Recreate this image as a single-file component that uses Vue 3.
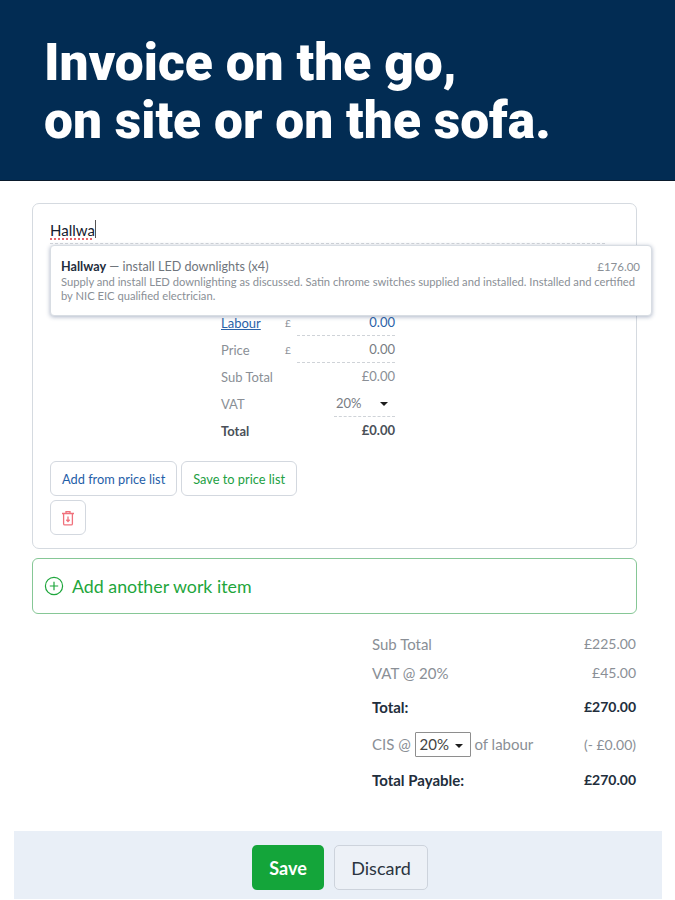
<template>
  <div class="page">
    <header class="hero">
      <h1>Invoice on the go,<br>on site or on the sofa.</h1>
    </header>

    <section class="card">
      <div class="title-row">
        <span class="typed">Hallwa</span><span class="caret"></span>
      </div>

      <div class="suggest">
        <div class="suggest-top">
          <span><b>Hallway</b> — install LED downlights (x4)</span>
          <span class="suggest-price">£176.00</span>
        </div>
        <p>Supply and install LED downlighting as discussed. Satin chrome switches supplied and installed. Installed and certified by NIC EIC qualified electrician.</p>
      </div>

      <div class="lines">
        <div class="line" v-for="row in priceRows" :key="row.label">
          <span class="lbl" :class="{ link: row.link }">{{ row.label }}</span>
          <span class="cur">£</span>
          <span class="val dashed" :class="{ blue: row.link }">{{ row.value }}</span>
        </div>
        <div class="line">
          <span class="lbl">Sub Total</span>
          <span class="cur"></span>
          <span class="val plain">£0.00</span>
        </div>
        <div class="line">
          <span class="lbl">VAT</span>
          <span class="cur"></span>
          <span class="val dashed vat">20%<i class="arrow"></i></span>
        </div>
        <div class="line strong">
          <span class="lbl">Total</span>
          <span class="cur"></span>
          <span class="val">£0.00</span>
        </div>
      </div>

      <div class="actions">
        <button class="btn blue-text">Add from price list</button>
        <button class="btn green-text">Save to price list</button>
      </div>
      <button class="btn trash" aria-label="Delete">
        <svg width="14" height="16" viewBox="0 0 14 16" fill="none" stroke="#f0717c" stroke-width="1.3">
          <path d="M1 3.5h12M5 3.5V1.6h4v1.9M2.6 3.5v10.2c0 .7.5 1.2 1.2 1.2h6.4c.7 0 1.2-.5 1.2-1.2V3.5" />
          <path d="M7 6.5v5M5.3 9.8 7 11.5l1.7-1.7" />
        </svg>
      </button>
    </section>

    <button class="add-item">
      <svg width="20" height="20" viewBox="0 0 20 20" fill="none" stroke="#1ea63c" stroke-width="1.2">
        <circle cx="10" cy="10" r="8.6" />
        <path d="M10 5.8v8.4M5.8 10h8.4" />
      </svg>
      <span>Add another work item</span>
    </button>

    <section class="totals">
      <div class="t-row"><span>Sub Total</span><span>£225.00</span></div>
      <div class="t-row"><span>VAT @ 20%</span><span>£45.00</span></div>
      <div class="t-row bold total"><span>Total:</span><span>£270.00</span></div>
      <div class="t-row cis">
        <span class="cis-label">CIS @ <span class="select">20%<i class="arrow"></i></span> of labour</span>
        <span>(- £0.00)</span>
      </div>
      <div class="t-row bold payable"><span>Total Payable:</span><span>£270.00</span></div>
    </section>

    <footer class="bar">
      <button class="save">Save</button>
      <button class="discard">Discard</button>
    </footer>
  </div>
</template>

<script setup>
const priceRows = [
  { label: 'Labour', value: '0.00', link: true },
  { label: 'Price', value: '0.00', link: false }
]
</script>

<style>
html, body {
  background: #fff;
}
</style>

<style scoped>
.page {
  width: 675px;
  height: 900px;
  overflow: hidden;
  font-family: "Lato", "Liberation Sans", sans-serif;
  color: #8a8f96;
}

button {
  font-family: inherit;
  cursor: pointer;
}

.hero {
  height: 181px;
  box-sizing: border-box;
  padding: 34px 44px 0;
  background: #022c53;
  border-bottom: 1px solid #0a1a2c;
}

.hero h1 {
  margin: 0;
  color: #fff;
  font-family: "Roboto", "Liberation Sans", sans-serif;
  font-size: 51.5px;
  font-weight: 900;
  line-height: 58px;
}

.card {
  position: relative;
  box-sizing: border-box;
  width: 605px;
  height: 346px;
  margin: 22px 0 0 32px;
  padding: 0 17px;
  border: 1px solid #d5dae0;
  border-radius: 7px;
}

.title-row {
  height: 40px;
  padding-top: 16px;
  box-sizing: border-box;
  display: flex;
  align-items: flex-start;
  border-bottom: 1px dashed #d3d6da;
  margin-right: 14px;
}

.typed {
  font-size: 15px;
  line-height: 20px;
  color: #14202e;
  text-decoration: underline dotted #e0353b;
  text-underline-offset: 3px;
}

.caret {
  width: 1px;
  height: 18px;
  background: #555;
}

.suggest {
  position: absolute;
  top: 41px;
  left: 17px;
  width: 602px;
  height: 71px;
  box-sizing: border-box;
  padding: 12px 11px 0 10px;
  background: #fff;
  border: 1px solid #d8dde3;
  border-radius: 4px;
  box-shadow: 0 1px 4px rgba(70, 90, 130, 0.45);
  z-index: 2;
}

.suggest-top {
  display: flex;
  justify-content: space-between;
  font-size: 12.6px;
  line-height: 17px;
  color: #6f757c;
}

.suggest-price {
  font-size: 11.5px;
  color: #8a8f96;
}

.suggest-top b {
  color: #1f2d3d;
  font-weight: 700;
}

.suggest p {
  margin: 0;
  font-size: 11.2px;
  line-height: 14px;
  color: #8a8f96;
}

.lines {
  margin: 65px 0 0 171px;
  width: 174px;
}

.line {
  display: flex;
  align-items: center;
  height: 27px;
  font-size: 13px;
}

.lbl {
  width: 64px;
}

.lbl.link {
  color: #2a62a8;
  text-decoration: underline;
}

.cur {
  width: 12px;
  font-size: 10px;
}

.val {
  flex: 1;
  height: 27px;
  line-height: 27px;
  text-align: right;
  color: #777c83;
}

.val.dashed {
  border-bottom: 1px dashed #cfd3d8;
  box-sizing: border-box;
}

.val.blue {
  color: #2a62a8;
}

.val.plain {
  color: #8a8f96;
}

.vat {
  flex: none;
  width: 61px;
  margin-left: 37px;
  text-align: left;
  padding-left: 2px;
}

.arrow {
  display: inline-block;
  width: 0;
  height: 0;
  margin-left: 18px;
  vertical-align: 2px;
  border-left: 4px solid transparent;
  border-right: 4px solid transparent;
  border-top: 4px solid #1d1d1d;
}

.line.strong {
  font-weight: 700;
  color: #4a5058;
}

.line.strong .val {
  color: #4a5058;
}

.actions {
  display: flex;
  gap: 4px;
  margin-top: 17px;
}

.btn {
  height: 35px;
  padding: 0 11px;
  background: #fff;
  border: 1px solid #d3d8df;
  border-radius: 6px;
  font-size: 12.8px;
}

.blue-text {
  color: #1f5ea8;
}

.green-text {
  color: #22a043;
}

.trash {
  display: flex;
  align-items: center;
  justify-content: center;
  width: 36px;
  margin-top: 4px;
  padding: 0;
}

.add-item {
  display: flex;
  align-items: center;
  gap: 8px;
  box-sizing: border-box;
  width: 605px;
  height: 56px;
  margin: 9px 0 0 32px;
  padding: 0 0 0 11px;
  background: #fff;
  border: 1px solid #86c796;
  border-radius: 6px;
  color: #1ea63c;
  font-size: 17.8px;
}

.totals {
  width: 264px;
  margin: 15px 0 0 372px;
  font-size: 15px;
}

.t-row {
  display: flex;
  justify-content: space-between;
  align-items: center;
  height: 29px;
}

.t-row span:last-child {
  font-size: 14px;
}

.bold {
  color: #222e3c;
  font-weight: 700;
}

.bold span:first-child {
  font-size: 15px;
}

.total {
  margin-top: 5px;
}

.cis {
  margin-top: 9px;
}

.cis-label {
  font-size: 15px !important;
}

.select {
  display: inline-block;
  box-sizing: border-box;
  width: 56px;
  height: 25px;
  line-height: 23px;
  padding-left: 4px;
  border: 1px solid #8e8e8e;
  border-radius: 1px;
  color: #444;
  font-size: 15px !important;
}

.select .arrow {
  margin-left: 6px;
}

.payable {
  margin-top: 6px;
}

.bar {
  display: flex;
  justify-content: center;
  gap: 10px;
  box-sizing: border-box;
  width: 648px;
  height: 68px;
  margin: 37px 0 0 14px;
  padding: 14px 0 0 4px;
  background: #e9eff7;
}

.save, .discard {
  height: 45px;
  border-radius: 5px;
  font-size: 18px;
}

.save {
  width: 72px;
  background: #14a53a;
  border: none;
  color: #fff;
  font-weight: 700;
}

.discard {
  width: 94px;
  background: #edf1f7;
  border: 1px solid #cdd3dc;
  color: #2b3440;
}
</style>
